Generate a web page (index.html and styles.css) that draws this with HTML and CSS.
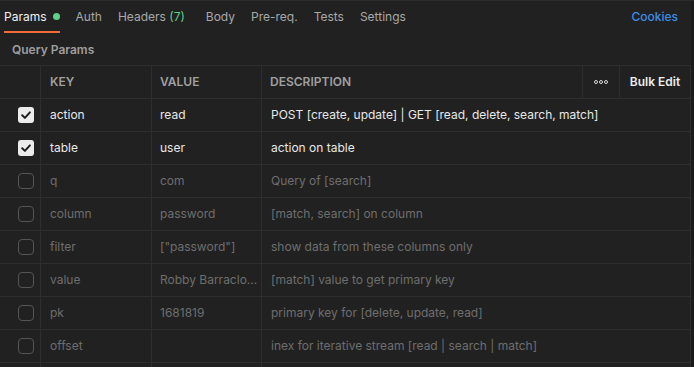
FILE: index.html
```html
<!DOCTYPE html>
<html>
<head>
<meta charset="utf-8">
<link rel="stylesheet" href="styles.css">
</head>
<body>
<div class="page">
  <nav class="tabs">
    <div class="tab active">Params<span class="dot"></span></div>
    <div class="tab">Auth</div>
    <div class="tab tab-wide">Headers <span class="count">(7)</span></div>
    <div class="tab">Body</div>
    <div class="tab">Pre-req.</div>
    <div class="tab">Tests</div>
    <div class="tab">Settings</div>
    <div class="spacer"></div>
    <div class="cookies">Cookies</div>
  </nav>
  <div class="section-title">Query Params</div>
  <div class="table">
    <div class="row head">
      <div class="cell c-check"></div>
      <div class="cell c-key">KEY</div>
      <div class="cell c-val">VALUE</div>
      <div class="cell c-desc-h">DESCRIPTION</div>
      <div class="cell c-more"><span class="more"><i></i><i></i><i></i></span></div>
      <div class="cell c-bulk">Bulk Edit</div>
    </div>
    <div class="row on">
      <div class="cell c-check"><span class="box checked"><svg viewBox="0 0 16 16" width="16" height="16"><path d="M4.2 8.3 L6.9 10.9 L11.9 5.4" fill="none" stroke="#1e1e1e" stroke-width="2" stroke-linecap="round" stroke-linejoin="round"/></svg></span></div>
      <div class="cell c-key">action</div>
      <div class="cell c-val">read</div>
      <div class="cell c-desc">POST [create, update] | GET [read, delete, search, match]</div>
    </div>
    <div class="row on">
      <div class="cell c-check"><span class="box checked"><svg viewBox="0 0 16 16" width="16" height="16"><path d="M4.2 8.3 L6.9 10.9 L11.9 5.4" fill="none" stroke="#1e1e1e" stroke-width="2" stroke-linecap="round" stroke-linejoin="round"/></svg></span></div>
      <div class="cell c-key">table</div>
      <div class="cell c-val">user</div>
      <div class="cell c-desc">action on table</div>
    </div>
    <div class="row off">
      <div class="cell c-check"><span class="box"></span></div>
      <div class="cell c-key">q</div>
      <div class="cell c-val">com</div>
      <div class="cell c-desc">Query of [search]</div>
    </div>
    <div class="row off">
      <div class="cell c-check"><span class="box"></span></div>
      <div class="cell c-key">column</div>
      <div class="cell c-val">password</div>
      <div class="cell c-desc">[match, search] on column</div>
    </div>
    <div class="row off">
      <div class="cell c-check"><span class="box"></span></div>
      <div class="cell c-key">filter</div>
      <div class="cell c-val">["password"]</div>
      <div class="cell c-desc">show data from these columns only</div>
    </div>
    <div class="row off">
      <div class="cell c-check"><span class="box"></span></div>
      <div class="cell c-key">value</div>
      <div class="cell c-val"><span class="ellipsis">Robby Barraclo...</span></div>
      <div class="cell c-desc">[match] value to get primary key</div>
    </div>
    <div class="row off">
      <div class="cell c-check"><span class="box"></span></div>
      <div class="cell c-key">pk</div>
      <div class="cell c-val">1681819</div>
      <div class="cell c-desc">primary key for [delete, update, read]</div>
    </div>
    <div class="row off">
      <div class="cell c-check"><span class="box"></span></div>
      <div class="cell c-key">offset</div>
      <div class="cell c-val"></div>
      <div class="cell c-desc">inex for iterative stream [read | search | match]</div>
    </div>
    <div class="row off">
      <div class="cell c-check"></div>
      <div class="cell c-key"></div>
      <div class="cell c-val"></div>
      <div class="cell c-desc"></div>
    </div>
  </div>
</div>
</body>
</html>
```
FILE: styles.css
```css
* { box-sizing: border-box; }
html, body {
  margin: 0;
  padding: 0;
  background: #212121;
  height: 100%;
  overflow: hidden;
}
body {
  font-family: Inter, "Noto Sans", sans-serif;
  font-size: 12px;
  color: #e8e8e8;
}
.page {
  width: 694px;
  height: 367px;
  border-top: 1px solid #2c2c2c;
  overflow: hidden;
  background: linear-gradient(to right, #212121 691px, #1b1b1b 691px);
}
.tabs {
  display: flex;
  align-items: stretch;
  height: 32px;
  padding-left: 4px;
  padding-right: 16px;
}
.tab {
  display: flex;
  align-items: center;
  color: #a8a8a8;
  margin-right: 16px;
  border-bottom: 2px solid transparent;
  white-space: pre;
}
.tab.tab-wide { margin-right: 21px; }
.tab.active {
  color: #f0f0f0;
  border-bottom-color: #f26b3a;
}
.dot {
  width: 7px;
  height: 7px;
  border-radius: 50%;
  background: #5fd08a;
  margin-left: 6px;
}
.count { color: #5fd08a; }
.spacer { flex: 1; }
.cookies {
  display: flex;
  align-items: center;
  color: #3b8ee6;
  font-weight: 500;
  padding-bottom: 2px;
}
.section-title {
  height: 32px;
  display: flex;
  align-items: center;
  padding-left: 12px;
  color: #9e9e9e;
  font-weight: 600;
}
.table {
  border-top: 1px solid #2e2e2e;
  width: 691px;
}
.row {
  display: flex;
  height: 33px;
  border-bottom: 1px solid #2e2e2e;
}
.cell {
  display: flex;
  align-items: center;
  border-right: 1px solid #2e2e2e;
  padding-left: 9px;
  padding-bottom: 1px;
  white-space: nowrap;
  overflow: hidden;
}
.c-check { width: 41px; padding: 0 6px 0 0; justify-content: flex-end; }
.c-key { width: 111px; }
.c-val { width: 110px; padding-left: 8px; }
.c-desc-h { width: 321px; padding-left: 8px; }
.c-desc { width: 429px; padding-left: 9px; }
.c-more { width: 37px; padding: 0; justify-content: center; }
.c-bulk { width: 71px; padding: 0 0 1px 0; justify-content: center; font-weight: 600; color: #ededed; }
.head .cell { color: #a0a0a0; font-weight: 600; }
.head .c-bulk { color: #ededed; }
.more { display: flex; gap: 1px; }
.more i {
  display: block;
  width: 4px;
  height: 4px;
  border: 1px solid #d8d8d8;
  border-radius: 50%;
}
.on .cell { color: #e8e8e8; }
.off .cell { color: #6e6e6e; }
.ellipsis {
  display: block;
  overflow: hidden;
}
.box {
  width: 16px;
  height: 16px;
  border-radius: 4px;
  border: 1px solid #555555;
  display: block;
}
.box.checked {
  background: #ececec;
  border: none;
  border-radius: 3px;
}
.box svg { display: block; }
```
